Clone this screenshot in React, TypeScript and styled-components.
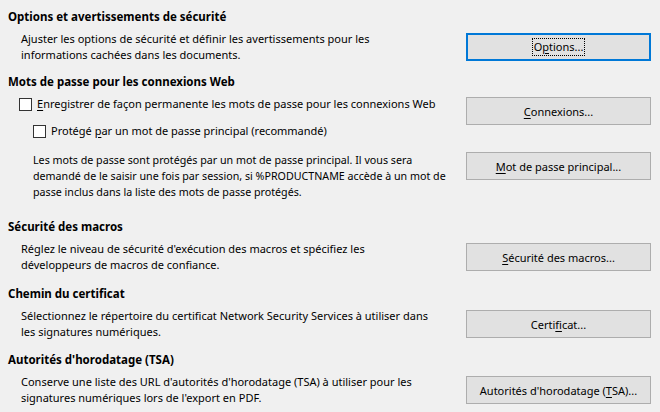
import React from 'react';
import styled, { createGlobalStyle } from 'styled-components';

const GlobalStyle = createGlobalStyle`
  html, body {
    margin: 0;
    padding: 0;
    background: #f0f0f0;
  }
  body {
    font-family: 'Noto Sans', 'Open Sans', sans-serif;
    font-size: 11px;
    color: #000;
  }
`;

const Page = styled.div`
  width: 660px;
  height: 412px;
  box-sizing: border-box;
  padding: 9px 9px 0 8px;
  display: flex;
  flex-direction: column;
  overflow: hidden;
  white-space: nowrap;
`;

const Section = styled.section<{ $gap?: number }>`
  display: flex;
  flex-direction: column;
  margin-top: ${(p) => p.$gap ?? 0}px;
`;

const Heading = styled.h2`
  margin: 0 0 6px;
  font-size: 11.5px;
  font-weight: 700;
  line-height: 16px;
`;

const Row = styled.div<{ $align?: string; $gap?: number }>`
  display: grid;
  grid-template-columns: 1fr 185px;
  column-gap: 16px;
  align-items: ${(p) => p.$align ?? 'center'};
  margin-top: ${(p) => p.$gap ?? 0}px;
`;

const Description = styled.p<{ $indent?: number; $small?: boolean }>`
  margin: 0;
  padding-left: ${(p) => p.$indent ?? 13}px;
  font-size: ${(p) => (p.$small ? 10.7 : 11)}px;
  line-height: 16px;
`;

const CheckList = styled.div`
  display: flex;
  flex-direction: column;
  gap: 11px;
`;

const CheckLabel = styled.label<{ $indent: number }>`
  display: flex;
  align-items: center;
  gap: 5px;
  padding-left: ${(p) => p.$indent}px;
  line-height: 16px;
`;

const Box = styled.span`
  width: 13px;
  height: 13px;
  box-sizing: border-box;
  border: 1px solid #333;
  background: #fff;
  flex-shrink: 0;
`;

const Button = styled.button<{ $focused?: boolean; $offset?: number }>`
  height: 28px;
  box-sizing: border-box;
  margin-top: ${(p) => p.$offset ?? 0}px;
  background: #e1e1e1;
  border: ${(p) => (p.$focused ? '2px solid #0078d7' : '1px solid #adadad')};
  font-family: inherit;
  font-size: 11px;
  color: #000;
  padding: 0;
  display: flex;
  align-items: center;
  justify-content: center;
`;

const FocusRect = styled.span`
  outline: 1px dotted #000;
  padding: 0 1px;
  line-height: 16px;
`;

const Key = styled.span`
  text-decoration: underline;
  text-underline-offset: 2px;
`;

export default function App() {
  return (
    <>
      <GlobalStyle />
      <Page>
        <Section>
          <Heading>Options et avertissements de sécurité</Heading>
          <Row>
            <Description>
              Ajuster les options de sécurité et définir les avertissements pour les
              <br />
              informations cachées dans les documents.
            </Description>
            <Button $focused>
              <FocusRect>
                O<Key>p</Key>tions...
              </FocusRect>
            </Button>
          </Row>
        </Section>

        <Section $gap={11}>
          <Heading>Mots de passe pour les connexions Web</Heading>
          <Row $align="start">
            <CheckList>
              <CheckLabel $indent={11}>
                <Box />
                <span>
                  <Key>E</Key>nregistrer de façon permanente les mots de passe pour les connexions Web
                </span>
              </CheckLabel>
              <CheckLabel $indent={25}>
                <Box />
                <span>
                  Protégé <Key>p</Key>ar un mot de passe principal (recommandé)
                </span>
              </CheckLabel>
            </CheckList>
            <Button $offset={1}>
              <span>
                <Key>C</Key>onnexions...
              </span>
            </Button>
          </Row>
          <Row $align="start" $gap={13}>
            <Description $indent={25} $small>
              Les mots de passe sont protégés par un mot de passe principal. Il vous sera
              <br />
              demandé de le saisir une fois par session, si %PRODUCTNAME accède à un mot de
              <br />
              passe inclus dans la liste des mots de passe protégés.
            </Description>
            <Button>
              <span>
                <Key>M</Key>ot de passe principal...
              </span>
            </Button>
          </Row>
        </Section>

        <Section $gap={19}>
          <Heading>Sécurité des macros</Heading>
          <Row>
            <Description>
              Réglez le niveau de sécurité d'exécution des macros et spécifiez les
              <br />
              développeurs de macros de confiance.
            </Description>
            <Button>
              <span>
                <Key>S</Key>écurité des macros...
              </span>
            </Button>
          </Row>
        </Section>

        <Section $gap={13}>
          <Heading>Chemin du certificat</Heading>
          <Row>
            <Description>
              Sélectionnez le répertoire du certificat Network Security Services à utiliser dans
              <br />
              les signatures numériques.
            </Description>
            <Button>
              <span>
                Certi<Key>f</Key>icat...
              </span>
            </Button>
          </Row>
        </Section>

        <Section $gap={12}>
          <Heading>Autorités d'horodatage (TSA)</Heading>
          <Row>
            <Description>
              Conserve une liste des URL d'autorités d'horodatage (TSA) à utiliser pour les
              <br />
              signatures numériques lors de l'export en PDF.
            </Description>
            <Button>
              <span>
                Autorités d'horodatage (<Key>T</Key>SA)...
              </span>
            </Button>
          </Row>
        </Section>
      </Page>
    </>
  );
}
